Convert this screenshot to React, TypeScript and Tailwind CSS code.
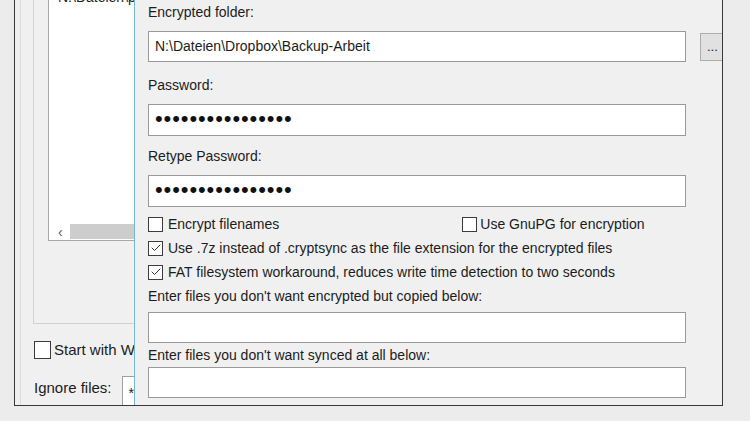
import { Check } from "lucide-react";

const font = { fontFamily: '"Liberation Sans", Arial, sans-serif' };

function Box({ checked, size = "w-[15px] h-[15px]" }: { checked?: boolean; size?: string }) {
    return (
        <div className={`${size} shrink-0 border border-[#3c3c3c] bg-white flex items-center justify-center`}>
            {checked && <Check className="w-[12px] h-[12px] text-[#333]" strokeWidth={2} />}
        </div>
    );
}

function Field({ h = "h-[31px]", children }: { h?: string; children?: React.ReactNode }) {
    return (
        <div className={`${h} w-[538px] shrink-0 border border-[#9a9a9a] bg-white flex items-center px-[6px]`}>
            {children}
        </div>
    );
}

function Dots() {
    return (
        <span className="text-[22px] leading-none tracking-[0.9px] text-[#111] -mt-[2px]">
            {"••••••••••••••••"}
        </span>
    );
}

function BackWindow() {
    return (
        <div className="w-[119px] shrink-0 h-full overflow-hidden bg-[#f0f0f0] text-[15px] text-[#1c1c1c]">
            <div className="ml-[5px] h-full border-l border-[#dcdcdc] flex flex-col">
                <div className="ml-[12px] w-[200px] h-[324px] shrink-0 border-l border-b border-[#d2d2d2]">
                    <div className="ml-[14px] w-[200px] h-[241px] border-l border-b border-[#a8a8a8] bg-white flex flex-col overflow-hidden">
                        <div className="-mt-[11px] pl-[9px] text-[14px] leading-[16px]">N:\Dateien\pro</div>
                        <div className="mt-auto h-[17px] flex items-center">
                            <span className="w-[21px] pl-[9px] text-[14px] text-[#555] leading-none">‹</span>
                            <div className="h-[15px] flex-1 bg-[#cdcdcd]" />
                        </div>
                    </div>
                </div>
                <div className="ml-[13px] mt-[15px] flex items-center gap-[3px] whitespace-nowrap">
                    <Box size="w-[17px] h-[18px]" />
                    <span>Start with Wi</span>
                </div>
                <div className="ml-[13px] mt-[14px] flex items-end whitespace-nowrap">
                    <span className="pb-[8px]">Ignore files:</span>
                    <div className="ml-[10px] h-[32px] w-[60px] border-l border-t border-[#a0a0a0] bg-white pl-[6px] pt-[6px] text-[14px]">*</div>
                </div>
            </div>
        </div>
    );
}

function Dialog() {
    return (
        <div className="flex-1 h-full overflow-hidden bg-[#f0f0f0] border-l border-[#74b8d9] pl-[13px] text-[14px] text-[#1c1c1c] flex flex-col">
            <div className="mt-[2px] h-[20px] flex items-center">Encrypted folder:</div>
            <div className="mt-[9px] flex items-center">
                <Field>
                    <span>N:\Dateien\Dropbox\Backup-Arbeit</span>
                </Field>
                <div className="ml-[14px] w-[30px] h-[28px] shrink-0 border border-[#adadad] bg-[#e1e1e1] flex items-center pl-[6px] text-[13px] leading-none">
                    ...
                </div>
            </div>
            <div className="mt-[13px] h-[20px] flex items-center">Password:</div>
            <div className="mt-[9px]">
                <Field h="h-[32px]">
                    <Dots />
                </Field>
            </div>
            <div className="mt-[10px] h-[20px] flex items-center">Retype Password:</div>
            <div className="mt-[9px]">
                <Field h="h-[32px]">
                    <Dots />
                </Field>
            </div>
            <div className="mt-[5px] h-[24px] flex items-center">
                <Box />
                <span className="ml-[5px]">Encrypt filenames</span>
                <div className="ml-[183px] flex items-center">
                    <Box />
                    <span className="ml-[3px]">Use GnuPG for encryption</span>
                </div>
            </div>
            <div className="h-[24px] flex items-center whitespace-nowrap">
                <Box checked />
                <span className="ml-[5px]">Use .7z instead of .cryptsync as the file extension for the encrypted files</span>
            </div>
            <div className="h-[24px] flex items-center whitespace-nowrap">
                <Box checked />
                <span className="ml-[5px]">FAT filesystem workaround, reduces write time detection to two seconds</span>
            </div>
            <div className="h-[24px] flex items-center whitespace-nowrap">
                Enter files you don't want encrypted but copied below:
            </div>
            <div className="mt-[4px]">
                <Field />
            </div>
            <div className="h-[24px] flex items-center whitespace-nowrap">
                Enter files you don't want synced at all below:
            </div>
            <Field />
        </div>
    );
}

export default function App() {
    return (
        <div className="w-[750px] h-[421px] overflow-hidden bg-[#ececec]" style={font}>
            <div className="ml-[14px] w-[709px] h-[406px] flex border-l border-r border-b border-[#383838]">
                <BackWindow />
                <Dialog />
            </div>
        </div>
    );
}
